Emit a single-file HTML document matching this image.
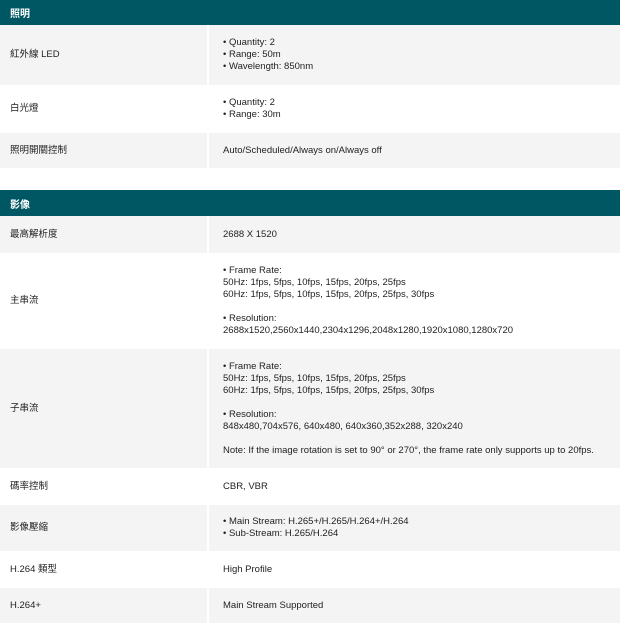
<!DOCTYPE html>
<html><head><meta charset="utf-8"><style>
*{margin:0;padding:0;box-sizing:border-box}
body{width:620px;height:620px;overflow:hidden;background:#fff;font-family:"Liberation Sans","Noto Sans CJK TC",sans-serif;font-size:9.5px;color:#222;position:relative}
.h{position:absolute;left:0;width:620px;background:#005764;color:#fff;font-weight:bold;font-size:10px;display:flex;align-items:center;padding-left:10px}
.r{position:absolute;left:0;width:620px;display:flex}
.r.g .c{background:#f4f4f4}
.c{display:flex;align-items:center;line-height:12px}
.l{width:207px;padding-left:10px}
.v{width:411px;margin-left:2px;padding-left:14px}
</style></head><body>
<div class="h" style="top:0;height:25px">照明</div>
<div class="r g" style="top:25px;height:60px"><div class="c l">紅外線 LED</div><div class="c v"><div>• Quantity: 2<br>• Range: 50m<br>• Wavelength: 850nm</div></div></div>
<div class="r" style="top:85px;height:48px"><div class="c l">白光燈</div><div class="c v"><div>• Quantity: 2<br>• Range: 30m</div></div></div>
<div class="r g" style="top:133px;height:35px"><div class="c l">照明開關控制</div><div class="c v">Auto/Scheduled/Always on/Always off</div></div>
<div class="h" style="top:190px;height:26px">影像</div>
<div class="r g" style="top:216px;height:37px"><div class="c l">最高解析度</div><div class="c v">2688 X 1520</div></div>
<div class="r" style="top:253px;height:96px"><div class="c l">主串流</div><div class="c v"><div>• Frame Rate:<br>50Hz: 1fps, 5fps, 10fps, 15fps, 20fps, 25fps<br>60Hz: 1fps, 5fps, 10fps, 15fps, 20fps, 25fps, 30fps<br><br>• Resolution:<br>2688x1520,2560x1440,2304x1296,2048x1280,1920x1080,1280x720</div></div></div>
<div class="r g" style="top:349px;height:119px"><div class="c l">子串流</div><div class="c v"><div>• Frame Rate:<br>50Hz: 1fps, 5fps, 10fps, 15fps, 20fps, 25fps<br>60Hz: 1fps, 5fps, 10fps, 15fps, 20fps, 25fps, 30fps<br><br>• Resolution:<br>848x480,704x576, 640x480, 640x360,352x288, 320x240<br><br>Note: If the image rotation is set to 90° or 270°, the frame rate only supports up to 20fps.</div></div></div>
<div class="r" style="top:468px;height:37px"><div class="c l">碼率控制</div><div class="c v">CBR, VBR</div></div>
<div class="r g" style="top:505px;height:46px"><div class="c l">影像壓縮</div><div class="c v"><div>• Main Stream: H.265+/H.265/H.264+/H.264<br>• Sub-Stream: H.265/H.264</div></div></div>
<div class="r" style="top:551px;height:37px"><div class="c l">H.264 類型</div><div class="c v">High Profile</div></div>
<div class="r g" style="top:588px;height:35px"><div class="c l">H.264+</div><div class="c v">Main Stream Supported</div></div>
</body></html>
